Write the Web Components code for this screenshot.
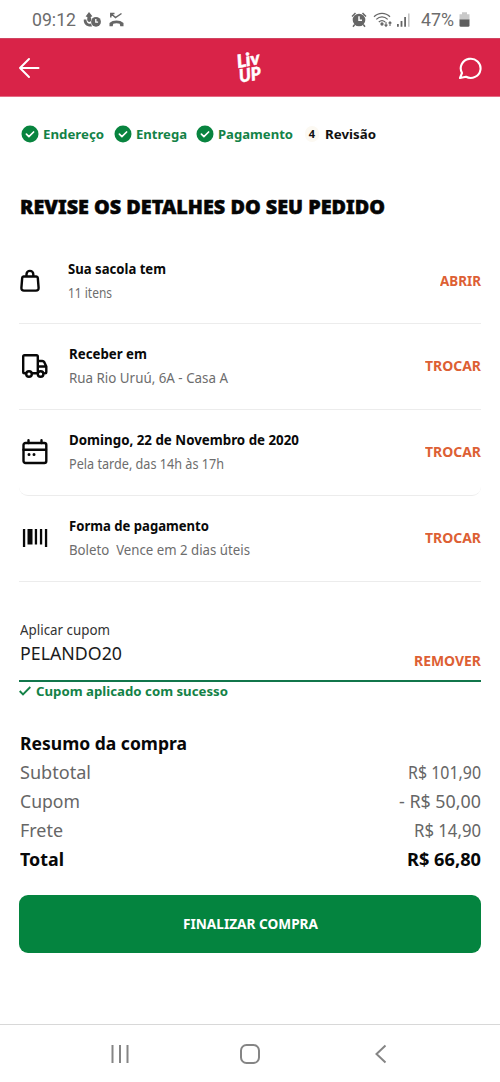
<!DOCTYPE html>
<html lang="pt-BR">
<head>
<meta charset="utf-8">
<title>Revisão do pedido</title>
<style>
html,body{margin:0;padding:0;background:#fff}
body{font-family:"Noto Sans","Open Sans",sans-serif;color:#0b0b0b}
</style>
</head>
<body>
<review-app></review-app>
<script>
function define(name, html, setup) {
  const tpl = document.createElement('template');
  tpl.innerHTML = html;
  customElements.define(name, class extends HTMLElement {
    connectedCallback() {
      if (this.shadowRoot) return;
      const root = this.attachShadow({mode: 'open'});
      root.append(tpl.content.cloneNode(true));
      if (setup) setup(this, root);
    }
  });
}

// One line of text, condensed horizontally to the width given by "w".
define('fit-text', `<style>:host{display:block;white-space:nowrap;flex:none}span{display:inline-block;transform-origin:0 50%}</style><span><slot></slot></span>`,
  (el, root) => {
    const s = root.querySelector('span'), w = +el.getAttribute('w');
    el.style.width = w + 'px';
    const k = w / s.getBoundingClientRect().width;
    if (isFinite(k) && k > 0) s.style.transform = `scaleX(${k})`;
  });

define('status-bar', `<style>
:host{display:flex;box-sizing:border-box;height:38px;padding:1px 30px 0 32px;align-items:center;color:#6c6c6c;font:17.5px/36px Roboto,sans-serif}
svg{display:block;flex:none}.a{margin-left:7px}.b{margin-left:7px}.sp{flex:1}
</style>
<fit-text w="44">09:12</fit-text>
<svg class="a" width="19" height="16" viewBox="0 0 19 16" fill="#666"><path d="M6 0l3.400 4.200L7.700 5c.5 2 .8 3.500-.2 4.500C6 10.500 4.200 9.500 4.200 7.500L4.400 5 2.600 4.400z"/><path d="M.8 7.500C.3 12 3.500 15 9 14.500L8 11.500C5.500 12.200 3.600 11 3.300 7.500z"/><circle cx="13" cy="9.800" r="4.900"/><path d="M12.800 7v3.200h2.300" fill="none" stroke="#fff" stroke-width="1.300"/></svg>
<svg class="b" width="15" height="16" viewBox="0 0 15 16"><path d="M1.800 5.500V1.500H5.500M2.200 1.800l4.300 3.700 6-4" fill="none" stroke="#666" stroke-width="1.500"/><path d="M.5 11c3.600-3.300 10.400-3.300 14 0v3.300h-3.200l-.6-2.600c-1.600-.7-4.800-.7-6.400 0l-.6 2.600H.5z" fill="#666"/></svg>
<div class="sp"></div>
<svg width="16" height="16" viewBox="0 0 16 16"><circle cx="8" cy="8" r="6.300" fill="#666"/><path d="M1 4.500L4.500 1M11.500 1L15 4.500M3.700 12.500L2 14.800M12.300 12.500l1.700 2.300" stroke="#666" stroke-width="1.500"/><path d="M8 4.200V8.300h3" fill="none" stroke="#fff" stroke-width="1.500"/></svg>
<svg style="margin-left:6px" width="20" height="16" viewBox="0 0 20 16" fill="none" stroke="#666" stroke-width="1.300"><path d="M1 4.800c4.600-4.700 11.400-4.700 16 0M3.300 7.400c3.400-3.300 8-3.300 11.400 0M5.800 10c2-1.700 4.400-1.700 6.400 0"/><circle cx="9" cy="12" r="1" fill="#666"/><path d="M13 10v4M11.600 12.700l1.400 1.600 1.400-1.600M17 14v-4M15.600 11.400L17 9.800l1.400 1.600" stroke-width="1.100"/></svg>
<svg style="margin-left:4px" width="14" height="16" viewBox="0 0 14 16" fill="#666"><path d="M0 12h1.800v2.800H0zM3.600 9h1.800v5.800H3.600zM7.200 5h1.800v9.800H7.200z"/><path d="M11 1.500h1.600v13.300H11z" fill="#c4c4c4"/></svg>
<fit-text w="33" style="margin-left:10px">47%</fit-text>
<svg style="margin-left:5px" width="11" height="16" viewBox="0 0 11 16"><path d="M3 .3h5v2h2.500V8H.5V2.300H3z" fill="#c9c9c9"/><path d="M.5 7.500h10v6q0 1.300-1.300 1.300H1.800Q.5 14.800.5 13.500z" fill="#5e5e5e"/></svg>`);

define('app-header', `<style>
:host{display:grid;grid-template-columns:1fr auto 1fr;align-items:center;box-sizing:border-box;height:59px;padding:0 18px;background:#d92348;border-bottom:1px solid #e56b84;border-top:1px solid #cf4561}
svg{display:block}.c{justify-self:end}
</style>
<svg width="22" height="22" viewBox="0 0 22 22" fill="none" stroke="#fff" stroke-width="2" stroke-linecap="round" stroke-linejoin="round"><path d="M20.500 11H2M11 2L2 11l9 9"/></svg>
<svg width="36" height="44" viewBox="0 0 36 44" fill="#fff" stroke="#fff" stroke-width=".5" font-family="Lato,sans-serif" font-style="italic" font-weight="900"><text transform="translate(6 22) rotate(-11)" font-size="18" textLength="23" lengthAdjust="spacingAndGlyphs">Liv</text><text transform="translate(8 36.500) rotate(-9)" font-size="18" textLength="22" lengthAdjust="spacingAndGlyphs">UP</text></svg>
<svg class="c" width="24" height="24" viewBox="0 0 24 24" fill="none" stroke="#fff" stroke-width="2.100" stroke-linejoin="round"><path d="M4 17A9.900 9.600 0 1 1 8 20.800L2 22z"/></svg>`);

define('step-item', `<style>
:host{display:flex;align-items:center;height:20px;font-size:13px;line-height:20px;font-weight:700;color:#138247}
svg{width:18px;height:18px;margin-right:4px;display:none}
i{display:none;width:14px;height:16px;border-radius:8px;background:#fcf9f2;font:700 11px/16px "Noto Sans",sans-serif;text-align:center;margin-right:6px}
:host([done]) svg{display:block}
:host(:not([done])){color:#111}:host(:not([done])) i{display:block}
</style><svg viewBox="0 0 18 18"><circle cx="9" cy="9" r="8.500" fill="#08843f"/><path d="M5.400 9.100l2.500 2.500L12.600 7" fill="none" stroke="#fff" stroke-width="1.700" stroke-linecap="round" stroke-linejoin="round"/></svg><i>4</i><slot></slot>`);

define('detail-row', `<style>
:host{display:flex;align-items:center;box-sizing:border-box;height:86px;padding:0 0 2px 3px;border-bottom:1px solid #ececec}
.ico{width:26px;height:28px;margin-right:21px;display:flex;align-items:center;justify-content:center}
.t{flex:1;display:flex;flex-direction:column;font-size:14px;line-height:24px}
.t1{font-weight:700;color:#090909}.t2{color:#6d6d6d;font-weight:400}
.act{font-size:13.500px;font-weight:700;color:#dd6034;line-height:24px;margin-right:.5px}
</style><div class="ico"><slot name="icon"></slot></div><div class="t"><div class="t1"><slot name="title"></slot></div><div class="t2"><slot name="sub"></slot></div></div><div class="act"><slot name="action"></slot></div>`);

define('coupon-field', `<style>
:host{display:block;padding-top:38px}
.f{display:flex;justify-content:space-between;align-items:flex-end;height:60px;border-bottom:2px solid #11764b}
.l{font-size:13.500px;line-height:20px;color:#333;padding-left:1px}.v{font-size:18px;line-height:27px;color:#1b1b1b;font-weight:400;padding:0 0 13px 1px}
.r{font-size:13.500px;line-height:20px;font-weight:700;color:#dd6034;padding-bottom:9px}
.ok{display:flex;align-items:center;height:20px;margin-top:-1px;font-size:13px;line-height:20px;font-weight:700;color:#138247}
svg{margin-right:5px}
</style>
<div class="f"><div><div class="l"><fit-text w="90">Aplicar cupom</fit-text></div><div class="v"><fit-text w="102">PELANDO20</fit-text></div></div><div class="r"><fit-text w="67">REMOVER</fit-text></div></div>
<div class="ok"><svg width="12" height="10" viewBox="0 0 12 10" fill="none" stroke="#138247" stroke-width="1.900"><path d="M.7 5l3.300 3.300L11.300 1"/></svg><fit-text w="192">Cupom aplicado com sucesso</fit-text></div>`);

define('sum-line', `<style>
:host{display:flex;justify-content:space-between;height:29px;padding-left:1px;line-height:29px;font-size:18px;color:#666;font-weight:400}
:host([strong]){font-weight:700;color:#080808}
</style><slot></slot>`);

define('primary-button', `<style>
:host{display:flex;align-items:center;justify-content:center;height:58px;margin-top:21px;border-radius:9px;background:#04843f;color:#fff;font-size:13.500px;line-height:20px;font-weight:700}
</style><slot></slot>`);

define('nav-bar', `<style>
:host{display:grid;grid-template-columns:1fr 22px 1fr;column-gap:109px;box-sizing:border-box;height:58px;border-top:1px solid #d8d8d8;align-items:center;padding:1px 0 0}
svg{display:block}.l{justify-self:end}
</style>
<svg class="l" width="20" height="20" viewBox="0 0 20 20" stroke="#858585" stroke-width="2"><path d="M2.500 1v18M10 1v18M17.500 1v18"/></svg>
<svg width="22" height="22" viewBox="0 0 22 22"><rect x="2" y="2" width="18" height="18" rx="5.500" fill="none" stroke="#858585" stroke-width="2"/></svg>
<svg width="22" height="20" viewBox="0 0 22 20" fill="none" stroke="#858585" stroke-width="2"><path d="M15.500 1.500L6.500 10l9 8.500"/></svg>`);

define('review-app', `<style>
:host{display:flex;flex-direction:column;height:1082px;width:500px;background:#fff}
main{flex:1;padding:0 19px}
nav{display:flex;padding:27px 0 0 2px}
h1{margin:0;padding-top:48px;font:900 20px/30px "Noto Sans","Open Sans",sans-serif;color:#050505;-webkit-text-stroke:.5px #050505}
svg{display:block}
.first{height:85px;padding:0;margin-top:17px}
.first svg{margin-right:5px}
.first [slot=title],.first [slot=sub]{margin-left:1.5px}
h2{margin:0;padding-top:28px;font-size:18px;line-height:29px;font-weight:700;color:#080808}
h1 fit-text,h2 fit-text{margin-left:.5px}
.round{border-radius:0 0 9px 9px}
.g{fill:none;stroke:#080808;stroke-width:2.400;stroke-linejoin:round;stroke-linecap:round}
</style>
<status-bar></status-bar><app-header></app-header>
<main>
<nav><step-item done style="margin-right:10px"><fit-text w="61">Endereço</fit-text></step-item><step-item done style="margin-right:9px"><fit-text w="51">Entrega</fit-text></step-item><step-item done style="margin-right:12px"><fit-text w="75">Pagamento</fit-text></step-item><step-item><fit-text w="51">Revisão</fit-text></step-item></nav>
<h1><fit-text w="365">REVISE OS DETALHES DO SEU PEDIDO</fit-text></h1>
<detail-row class="first">
<svg slot="icon" class="g" width="20" height="24" viewBox="0 0 20 24"><path d="M3 7.500h12.800q1.400 0 1.500 1.400l.8 10q.1 2.700-2.600 2.700h-12q-2.700 0-2.600-2.700l.8-10Q1.800 7.500 3 7.500zM6 7.500V5.300a3.400 3.400 0 0 1 6.800 0v2.200" transform="translate(.5 0)"/></svg>
<fit-text slot="title" w="98">Sua sacola tem</fit-text><fit-text slot="sub" w="44">11 itens</fit-text><fit-text slot="action" w="41">ABRIR</fit-text></detail-row>
<detail-row>
<svg slot="icon" class="g" width="26" height="24" viewBox="0 0 26 24"><path d="M4 19.300H2.500q-1.300 0-1.300-1.300V2.500q0-1.300 1.300-1.300h12q1.300 0 1.300 1.300v16.800H10M15.800 7h4.500q1.300 0 2 1.200l2 4.300v5.500q0 1.300-1.300 1.300M15.800 12.500h8"/><circle cx="7" cy="20" r="2.800"/><circle cx="18.600" cy="20" r="2.800"/></svg>
<fit-text slot="title" w="78">Receber em</fit-text><fit-text slot="sub" w="159">Rua Rio Uruú, 6A - Casa A</fit-text><fit-text slot="action" w="56">TROCAR</fit-text></detail-row>
<detail-row class="round">
<svg slot="icon" class="g" width="26" height="26" viewBox="0 0 26 26"><rect x="1.500" y="4" width="22.800" height="20" rx="2"/><path d="M1.500 10.800H24M6.500 1.300V4M19.500 1.300V4"/><path d="M7 15.400h.01M12 15.400h.01" stroke-width="3"/></svg>
<fit-text slot="title" w="230">Domingo, 22 de Novembro de 2020</fit-text><fit-text slot="sub" w="155">Pela tarde, das 14h às 17h</fit-text><fit-text slot="action" w="56">TROCAR</fit-text></detail-row>
<detail-row>
<svg slot="icon" width="26" height="20" viewBox="0 0 26 20" fill="#080808"><path d="M.9 1h2.300v18H.900zM5.500 1h5v15.500h-5zM12.800 1h2.300v15.500h-2.300zM17.900 1h2.300v15.500h-2.300zM22.900 1h2.300v18h-2.300z"/></svg>
<fit-text slot="title" w="140">Forma de pagamento</fit-text><fit-text slot="sub" w="181">Boleto&nbsp; Vence em 2 dias úteis</fit-text><fit-text slot="action" w="56">TROCAR</fit-text></detail-row>
<coupon-field></coupon-field>
<h2><fit-text w="167">Resumo da compra</fit-text></h2>
<sum-line><fit-text w="71">Subtotal</fit-text><fit-text w="73">R$ 101,90</fit-text></sum-line>
<sum-line><fit-text w="60">Cupom</fit-text><fit-text w="82">- R$ 50,00</fit-text></sum-line>
<sum-line><fit-text w="43">Frete</fit-text><fit-text w="67">R$ 14,90</fit-text></sum-line>
<sum-line strong><fit-text w="44">Total</fit-text><fit-text w="74">R$ 66,80</fit-text></sum-line>
<primary-button><fit-text w="135">FINALIZAR COMPRA</fit-text></primary-button>
</main>
<nav-bar></nav-bar>`);
</script>
</body>
</html>
